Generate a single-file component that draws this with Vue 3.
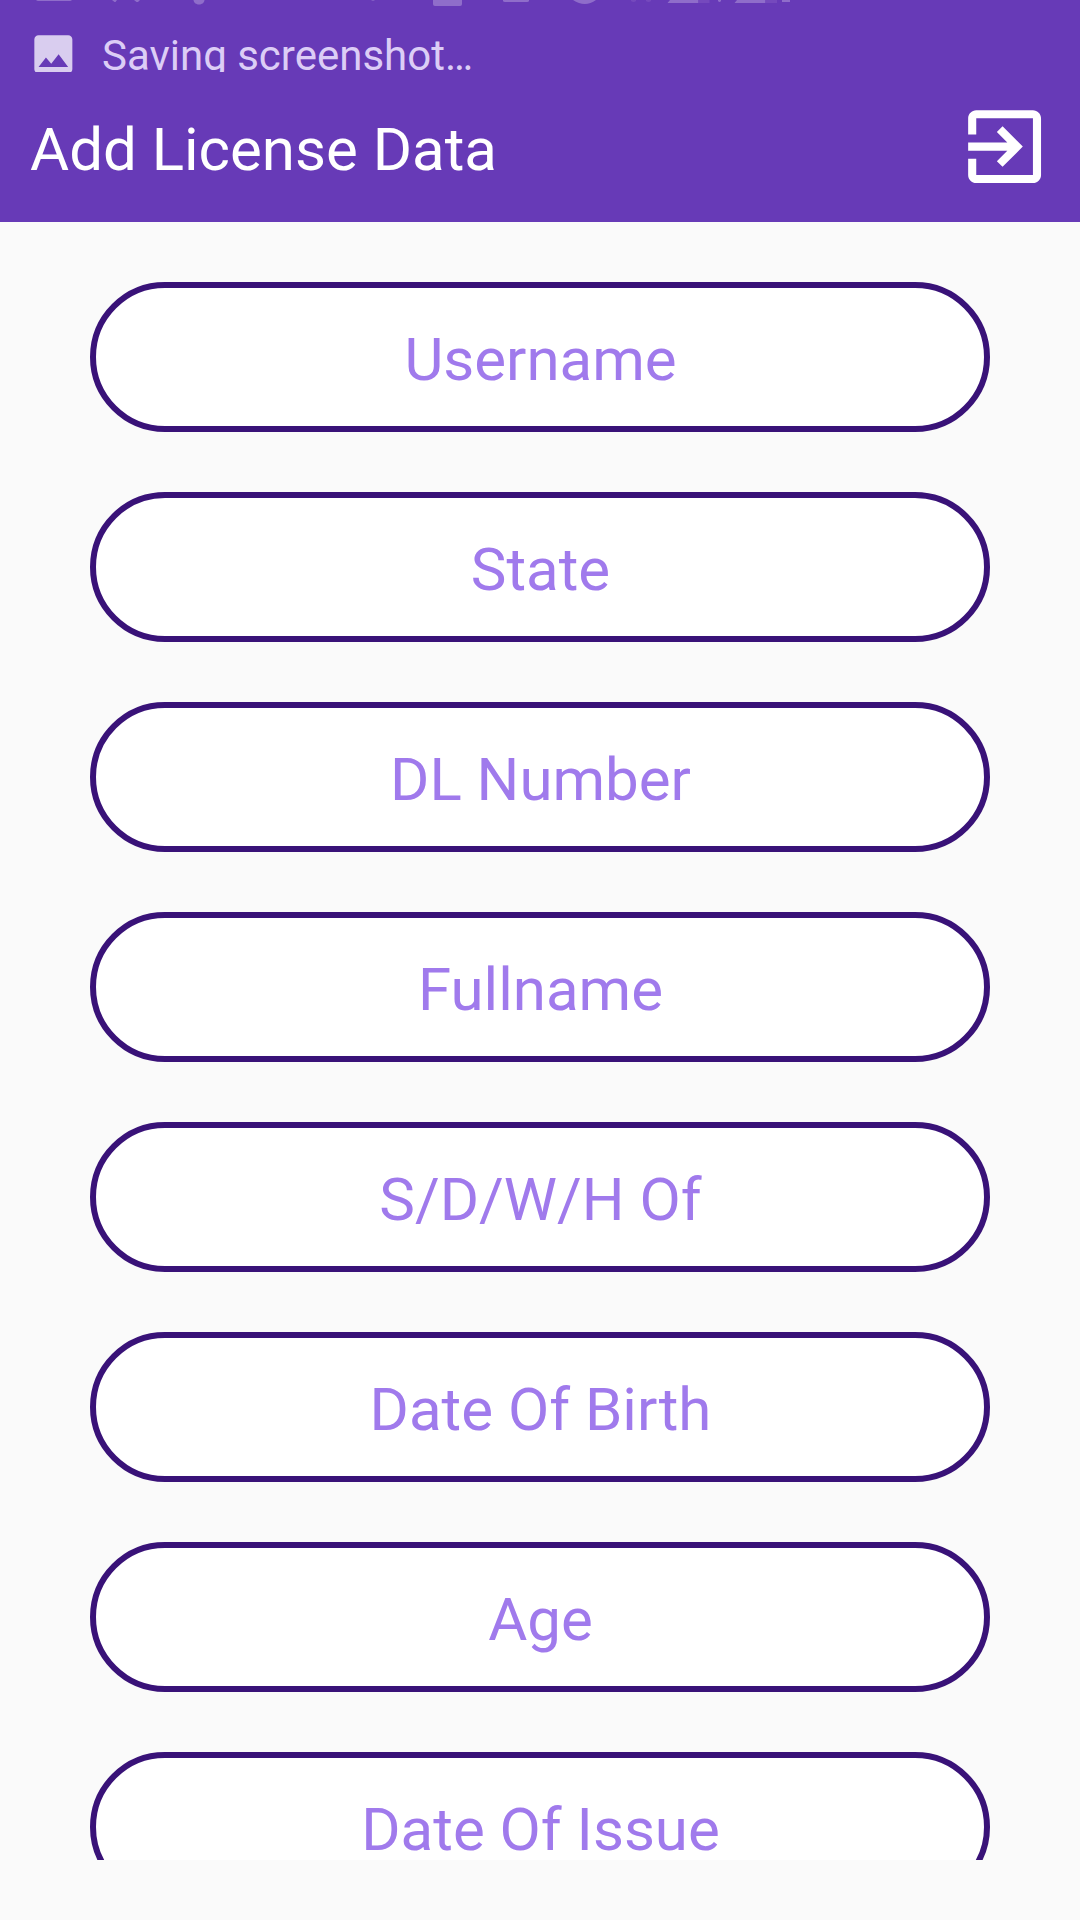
<script setup>
const fields = [
  'Username',
  'State',
  'DL Number',
  'Fullname',
  'S/D/W/H Of',
  'Date Of Birth',
  'Age',
  'Date Of Issue',
]
</script>

<template>
  <div class="screen">
    <header class="header">
      <div class="status">
        <!-- lower edges of the status icons scrolling out at the top -->
        <svg class="outgoing" width="1080" height="8" viewBox="0 0 1080 8">
          <g fill="#8f6dca">
            <path d="M36 0H72Q71 1 70 1H38Q37 1 36 0Z" />
            <path d="M112 0H117L115.500 2H114.500ZM134 0H140L138 2H136.500Z" />
            <path d="M193.500 0H204.500C204 6 194 6 193.500 0Z" />
            <path d="M371 0H375Q373 1.500 371 0Z" />
            <path d="M433 0H462V4Q462 6 460 6H435Q433 6 433 4Z" />
            <path d="M503 0H529V.5Q529 2 527 2H505Q503 2 503 .5Z" />
            <path d="M573 0H596Q585 8 573 0Z" />
            <path d="M670 0H698.500V3H667.500ZM737 0H765.500V3H734.500Z" />
            <path d="M718 0H721V1Q719.500 3 718 1ZM782 0H790V2H782Z" />
          </g>
          <g fill="#7549bd">
            <path d="M631 0H636V1Q633.500 3 631 1ZM646 0H651V1Q648.500 3 646 1Z" />
            <path d="M698.500 0H709.500V3H698.500ZM765.500 0H777V3H765.500Z" />
          </g>
        </svg>
        <div class="notice">
          <svg class="picture" viewBox="0 0 24 24">
            <path fill="#d9cdef" d="M21 19V5c0-1.100-.9-2-2-2H5c-1.100 0-2 .9-2 2v14c0 1.100.9 2 2 2h14c1.100 0 2-.9 2-2zM8.500 13.500l2.500 3.010L14.500 12l4.500 6H5l3.500-4.500z" />
          </svg>
          <span class="ticker">Saving screenshot…</span>
        </div>
      </div>
      <div class="toolbar">
        <h1 class="title">Add License Data</h1>
        <svg class="exit" viewBox="0 0 24 24">
          <path fill="#fff" d="M10.090 15.590L11.500 17l5-5-5-5-1.410 1.410L12.670 11H3v2h9.670l-2.580 2.590zM19 3H5c-1.110 0-2 .9-2 2v4h2V5h14v14H5v-4H3v4c0 1.100.89 2 2 2h14c1.100 0 2-.9 2-2V5c0-1.100-.9-2-2-2z" />
        </svg>
      </div>
    </header>
    <main class="form">
      <div v-for="field in fields" :key="field" class="field">{{ field }}</div>
    </main>
  </div>
</template>

<style>
body {
  background: #fafafa;
}
</style>

<style scoped>
.screen {
  width: 1080px;
  height: 1920px;
  overflow: hidden;
  background: #fafafa;
  font-family: Roboto, sans-serif;
}
.header {
  height: 222px;
  background: #673ab7;
}
.status {
  height: 72px;
  overflow: hidden;
}
.outgoing {
  display: block;
}
.notice {
  display: flex;
  align-items: flex-start;
  padding: 20.500px 0 0 28.400px;
}
.picture {
  flex: none;
  width: 50.700px;
  height: 50.700px;
}
.ticker {
  margin: 2px 0 0 22.900px;
  font-size: 42px;
  line-height: 50px;
  white-space: nowrap;
  color: #dccdf6;
}
.toolbar {
  display: flex;
  align-items: center;
  justify-content: space-between;
  height: 150px;
  padding: 0 26.500px 0 30px;
}
.title {
  margin: 6px 0 0;
  font-size: 60px;
  font-weight: 400;
  line-height: 70px;
  color: #fff;
}
.exit {
  width: 97.200px;
  height: 97.200px;
}
.form {
  display: flex;
  flex-direction: column;
  gap: 60px;
  box-sizing: border-box;
  height: 1638px;
  padding: 60px 90px 0;
  overflow: hidden;
}
.field {
  flex: none;
  box-sizing: border-box;
  height: 150px;
  padding: 5px 0 0 1px;
  border: 6px solid #391278;
  border-radius: 75px;
  background: #fff;
  font-size: 60px;
  line-height: 134px;
  text-align: center;
  color: #a07aec;
}
</style>
